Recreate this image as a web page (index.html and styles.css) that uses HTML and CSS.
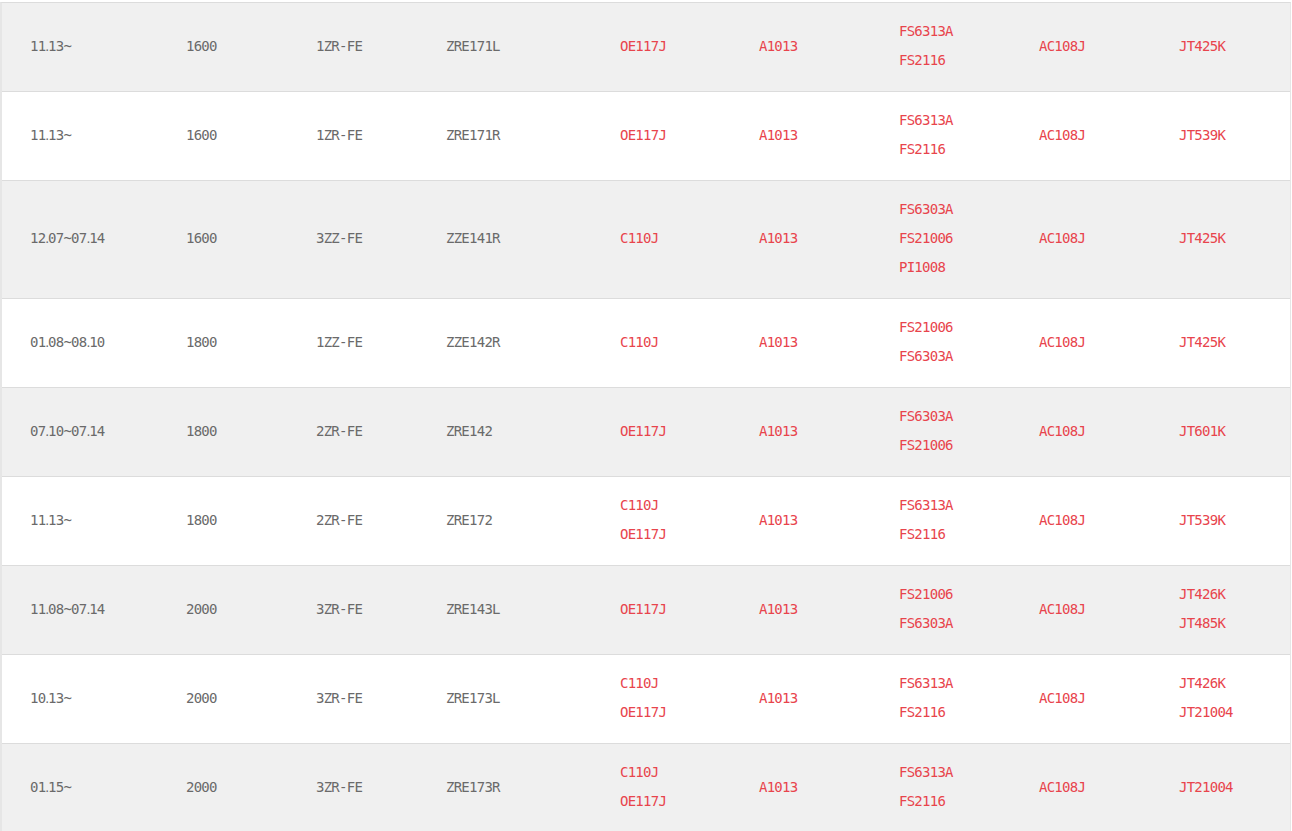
FILE: index.html
```html
<!DOCTYPE html>
<html>
<head>
<meta charset="utf-8">
<link rel="stylesheet" href="styles.css">
</head>
<body>
<table class="parts">
  <colgroup>
    <col class="c1"><col class="c2"><col class="c3"><col class="c4"><col class="c5"><col class="c6"><col class="c7"><col class="c8"><col class="c9">
  </colgroup>
  <tbody>
    <tr class="alt">
      <td>11<span class="dot">.</span>13~</td><td>1600</td><td>1ZR-FE</td><td>ZRE171L</td>
      <td class="red">OE117J</td><td class="red">A1013</td><td class="red">FS6313A<br>FS2116</td><td class="red">AC108J</td><td class="red">JT425K</td>
    </tr>
    <tr>
      <td>11<span class="dot">.</span>13~</td><td>1600</td><td>1ZR-FE</td><td>ZRE171R</td>
      <td class="red">OE117J</td><td class="red">A1013</td><td class="red">FS6313A<br>FS2116</td><td class="red">AC108J</td><td class="red">JT539K</td>
    </tr>
    <tr class="alt">
      <td>12<span class="dot">.</span>07~07<span class="dot">.</span>14</td><td>1600</td><td>3ZZ-FE</td><td>ZZE141R</td>
      <td class="red">C110J</td><td class="red">A1013</td><td class="red">FS6303A<br>FS21006<br>PI1008</td><td class="red">AC108J</td><td class="red">JT425K</td>
    </tr>
    <tr>
      <td>01<span class="dot">.</span>08~08<span class="dot">.</span>10</td><td>1800</td><td>1ZZ-FE</td><td>ZZE142R</td>
      <td class="red">C110J</td><td class="red">A1013</td><td class="red">FS21006<br>FS6303A</td><td class="red">AC108J</td><td class="red">JT425K</td>
    </tr>
    <tr class="alt">
      <td>07<span class="dot">.</span>10~07<span class="dot">.</span>14</td><td>1800</td><td>2ZR-FE</td><td>ZRE142</td>
      <td class="red">OE117J</td><td class="red">A1013</td><td class="red">FS6303A<br>FS21006</td><td class="red">AC108J</td><td class="red">JT601K</td>
    </tr>
    <tr>
      <td>11<span class="dot">.</span>13~</td><td>1800</td><td>2ZR-FE</td><td>ZRE172</td>
      <td class="red">C110J<br>OE117J</td><td class="red">A1013</td><td class="red">FS6313A<br>FS2116</td><td class="red">AC108J</td><td class="red">JT539K</td>
    </tr>
    <tr class="alt">
      <td>11<span class="dot">.</span>08~07<span class="dot">.</span>14</td><td>2000</td><td>3ZR-FE</td><td>ZRE143L</td>
      <td class="red">OE117J</td><td class="red">A1013</td><td class="red">FS21006<br>FS6303A</td><td class="red">AC108J</td><td class="red">JT426K<br>JT485K</td>
    </tr>
    <tr>
      <td>10<span class="dot">.</span>13~</td><td>2000</td><td>3ZR-FE</td><td>ZRE173L</td>
      <td class="red">C110J<br>OE117J</td><td class="red">A1013</td><td class="red">FS6313A<br>FS2116</td><td class="red">AC108J</td><td class="red">JT426K<br>JT21004</td>
    </tr>
    <tr class="alt">
      <td>01<span class="dot">.</span>15~</td><td>2000</td><td>3ZR-FE</td><td>ZRE173R</td>
      <td class="red">C110J<br>OE117J</td><td class="red">A1013</td><td class="red">FS6313A<br>FS2116</td><td class="red">AC108J</td><td class="red">JT21004</td>
    </tr>
  </tbody>
</table>
</body>
</html>
```

FILE: styles.css
```css
html, body {
  margin: 0;
  padding: 0;
  background: #ffffff;
}

.parts {
  margin-top: 2px;
  width: 1291px;
  table-layout: fixed;
  border-collapse: separate;
  border-spacing: 0;
  border-top: 1px solid #dcdcdc;
  border-left: 2px solid #e6e6e6;
  border-right: 1px solid #e6e6e6;
  font-family: "DejaVu Sans Mono", monospace;
  font-size: 14px;
  letter-spacing: -0.75px;
  color: #6a6a6a;
}

.c1 { width: 156px; }
.c2 { width: 130px; }
.c3 { width: 130px; }
.c4 { width: 174px; }
.c5 { width: 139px; }
.c6 { width: 140px; }
.c7 { width: 140px; }
.c8 { width: 140px; }
.c9 { width: 139px; }

.parts td {
  padding: 14px 0 16px 28px;
  line-height: 29px;
  vertical-align: middle;
  border-bottom: 1px solid #dcdcdc;
  white-space: nowrap;
}

.parts tr.alt td {
  background: #f0f0f0;
}

.parts td.red {
  color: #e8444c;
}

.dot {
  font-family: "Liberation Sans", sans-serif;
  letter-spacing: -1.2px;
}
```
